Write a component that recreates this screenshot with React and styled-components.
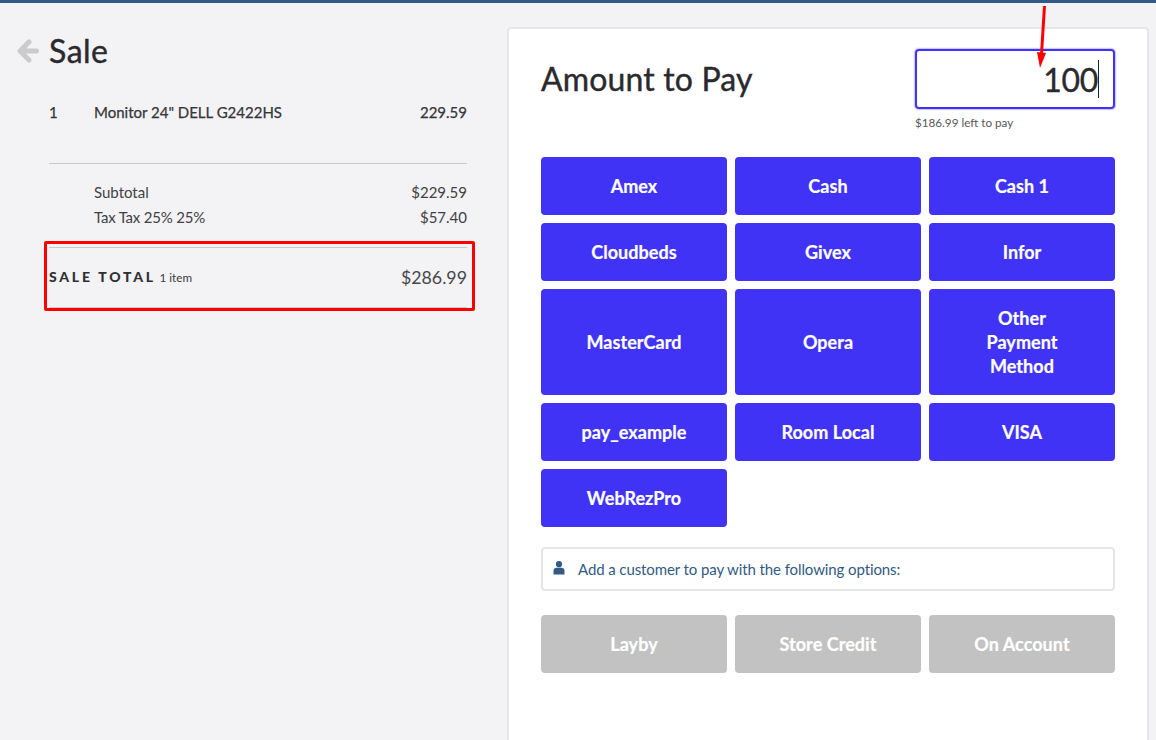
import React from "react";
import styled, { createGlobalStyle } from "styled-components";

const Global = createGlobalStyle`
  html, body { margin: 0; padding: 0; height: 100%; overflow: hidden; }
  body { background: #f3f2f5; font-family: Lato, "Open Sans", sans-serif; color: #2a2a2e; }
`;
const Page = styled.div`
  position: relative;
  width: 1156px;
  height: 740px;
  overflow: hidden;
  box-sizing: border-box;
  border-top: 3px solid #325a84;
  display: flex;
  align-items: flex-start;
`;
const Left = styled.section`
  position: relative;
  width: 418px;
  margin-left: 49px;
  flex: none;
`;
const Heading = styled.div`
  position: relative;
  height: 48px;
  margin-top: 24px;
  display: flex;
  align-items: center;
`;
const BackIcon = styled.svg`
  position: absolute;
  left: -33px;
  top: 12px;
  width: 24px;
  height: 24px;
`;
const Title = styled.h1`
  margin: 0;
  font-size: 32px;
  font-weight: 400;
  -webkit-text-stroke: 0.4px #2a2a2e;
  letter-spacing: 0.5px;
  line-height: 48px;
`;
const ItemRow = styled.div`
  display: grid;
  grid-template-columns: 45px 1fr auto;
  margin-top: 25px;
  height: 24px;
  line-height: 24px;
  font-size: 15px;
  font-weight: 400;
  -webkit-text-stroke: 0.25px #36363a;
  color: #36363a;
  padding-bottom: 39px;
  border-bottom: 1px solid #c9c8cb;
`;
const Totals = styled.div`
  padding: 16px 0 0 45px;
`;
const TotalRow = styled.div`
  display: flex;
  justify-content: space-between;
  font-size: 15px;
  line-height: 25px;
  color: #414145;
`;
const TaxLabel = styled.span`
  letter-spacing: -0.2px;
`;
const SaleTotal = styled.div`
  margin-top: 17px;
  height: 59px;
  border-top: 1px solid #c9c8cb;
  border-bottom: 1px solid #c9c8cb;
  display: flex;
  justify-content: space-between;
  align-items: center;
`;
const SaleLabel = styled.div`
  font-size: 14px;
  font-weight: 900;
  letter-spacing: 2.75px;
  color: #2f2f33;
  position: relative;
  top: -1px;
`;
const ItemCount = styled.span`
  font-size: 11.7px;
  font-weight: 400;
  letter-spacing: 0;
  margin-left: -2px;
  color: #3c3c40;
`;
const SaleAmount = styled.div`
  font-size: 17.8px;
  color: #47474b;
  position: relative;
  top: -1px;
`;
const Highlight = styled.div`
  position: absolute;
  left: -5px;
  top: 238px;
  width: 431px;
  height: 70px;
  box-sizing: border-box;
  border: 3px solid #fe0000;
  border-radius: 2px;
`;
const Panel = styled.main`
  box-sizing: border-box;
  width: 642px;
  height: 760px;
  margin: 24px 0 0 40px;
  flex: none;
  background: #fff;
  border: 2px solid #e6e5e8;
  border-radius: 4px;
  padding: 20px 32px 0 32px;
`;
const PanelHead = styled.div`
  display: flex;
  justify-content: space-between;
  align-items: flex-start;
`;
const PanelTitle = styled.h2`
  margin: 8px 0 0;
  font-size: 32px;
  font-weight: 400;
  -webkit-text-stroke: 0.4px #2a2a2e;
  letter-spacing: 0.15px;
  line-height: 44px;
  color: #2a2a2e;
`;
const AmountBlock = styled.div`
  width: 200px;
`;
const AmountBox = styled.div`
  box-sizing: border-box;
  height: 60px;
  border: 2px solid #4033f5;
  border-radius: 4px;
  box-shadow: 0 0 2px #4033f5;
  display: flex;
  justify-content: flex-end;
  align-items: center;
  padding-right: 14px;
  font-size: 32px;
  letter-spacing: -0.3px;
  -webkit-text-stroke: 0.35px #2a2a2e;
  color: #2a2a2e;
`;
const Caret = styled.span`
  display: inline-block;
  width: 1px;
  height: 38px;
  background: #222;
`;
const LeftToPay = styled.div`
  font-size: 11.7px;
  line-height: 14px;
  margin-top: 6px;
  color: #57575b;
`;
const PayGrid = styled.div`
  display: grid;
  grid-template-columns: repeat(3, 186px);
  grid-template-rows: 58px 58px 106px 58px 58px;
  gap: 8px;
  margin-top: 28px;
`;
const PayButton = styled.button`
  border: 0;
  margin: 0;
  padding: 0 40px;
  border-radius: 4px;
  background: ${(p) => (p.$disabled ? "#c2c2c2" : "#4033f5")};
  color: #fff;
  font-family: inherit;
  font-size: 18px;
  font-weight: 700;
  line-height: 24px;
  letter-spacing: 0.05px;
  -webkit-text-stroke: 0.2px #fff;
  text-align: center;
  white-space: ${(p) => (p.$wrap ? "normal" : "nowrap")};
`;
const CustomerBox = styled.div`
  box-sizing: border-box;
  height: 44px;
  margin-top: 20px;
  border: 2px solid #e6e5e8;
  border-radius: 4px;
  display: flex;
  align-items: center;
  padding-left: 10px;
  font-size: 15px;
  letter-spacing: -0.1px;
  color: #325a84;
`;
const PersonIcon = styled.svg`
  width: 12px;
  height: 14px;
  margin-right: 13px;
  position: relative;
  top: -1px;
`;
const DisabledRow = styled(PayGrid)`
  grid-template-rows: 58px;
  margin-top: 24px;
`;
const Arrow = styled.svg`
  position: absolute;
  left: 1030px;
  top: 3px;
  width: 24px;
  height: 64px;
`;

export default function App() {
  return (
    <Page>
      <Global />
      <Left>
        <Heading>
          <BackIcon viewBox="0 0 24 24">
            <path d="M13 3 L4 12 L13 21 M5 12 H20.5" fill="none" stroke="#cbcacd" strokeWidth="5" strokeLinecap="round" strokeLinejoin="round" />
          </BackIcon>
          <Title>Sale</Title>
        </Heading>
        <ItemRow>
          <span>1</span>
          <span>Monitor 24" DELL G2422HS</span>
          <span>229.59</span>
        </ItemRow>
        <Totals>
          <TotalRow><span>Subtotal</span><span>$229.59</span></TotalRow>
          <TotalRow><TaxLabel>Tax Tax 25% 25%</TaxLabel><span>$57.40</span></TotalRow>
        </Totals>
        <SaleTotal>
          <SaleLabel>SALE TOTAL <ItemCount>1 item</ItemCount></SaleLabel>
          <SaleAmount>$286.99</SaleAmount>
        </SaleTotal>
        <Highlight />
      </Left>
      <Panel>
        <PanelHead>
          <PanelTitle>Amount to Pay</PanelTitle>
          <AmountBlock>
            <AmountBox>100<Caret /></AmountBox>
            <LeftToPay>$186.99 left to pay</LeftToPay>
          </AmountBlock>
        </PanelHead>
        <PayGrid>
          {["Amex", "Cash", "Cash 1", "Cloudbeds", "Givex", "Infor", "MasterCard", "Opera"].map((n) => (
            <PayButton key={n}>{n}</PayButton>
          ))}
          <PayButton $wrap>Other Payment Method</PayButton>
          {["pay_example", "Room Local", "VISA", "WebRezPro"].map((n) => (
            <PayButton key={n}>{n}</PayButton>
          ))}
        </PayGrid>
        <CustomerBox>
          <PersonIcon viewBox="0 0 12 14">
            <circle cx="6" cy="3.2" r="3.1" fill="#325a84" />
            <path d="M0.5 13.5 V10 C0.5 7.8 2 6.8 3.5 6.8 H8.5 C10 6.8 11.5 7.8 11.5 10 V13.5 Z" fill="#325a84" />
          </PersonIcon>
          Add a customer to pay with the following options:
        </CustomerBox>
        <DisabledRow>
          {["Layby", "Store Credit", "On Account"].map((n) => (
            <PayButton key={n} $disabled>{n}</PayButton>
          ))}
        </DisabledRow>
      </Panel>
      <Arrow viewBox="0 0 24 64">
        <path d="M14.5 0 L11.5 48" stroke="#fe0000" strokeWidth="3" fill="none" />
        <path d="M7 46 L16 47 L10 62 Z" fill="#fe0000" />
      </Arrow>
    </Page>
  );
}
